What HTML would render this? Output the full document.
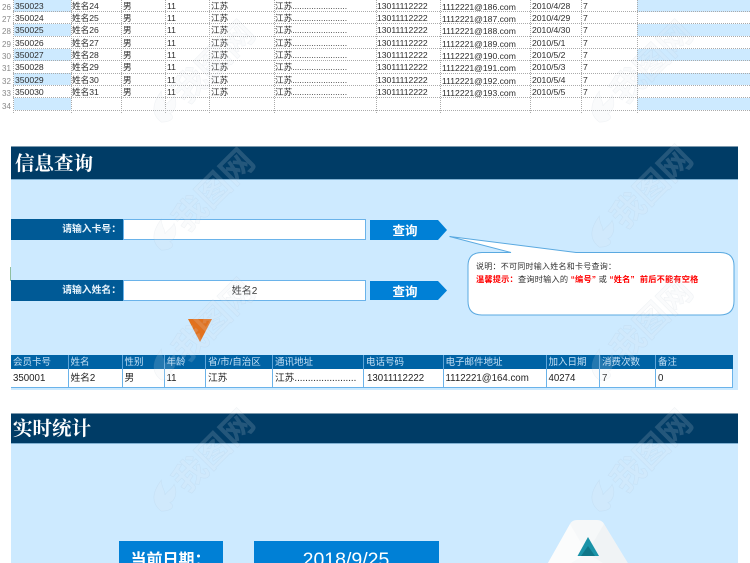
<!DOCTYPE html>
<html lang="zh">
<head>
<meta charset="utf-8">
<style>
html,body{margin:0;padding:0;background:#fff}
#p{position:relative;width:750px;height:563px;overflow:hidden;background:#fff;font-family:"Liberation Sans","Noto Sans CJK SC",sans-serif;filter:blur(.3px)}
#p div{position:absolute;box-sizing:border-box;white-space:nowrap}
.r{left:0;width:750px;height:12.33px;font-size:8.6px;line-height:11.5px;color:#2c2c2c}
.r span{position:absolute;top:1.5px;height:12.33px}
.r .n{left:2px;top:2.5px;color:#888;font-size:8px}
.a{left:15px}.b{left:72px}.c{left:123px}.d{left:167px}.e{left:211px}.f{left:275px}.g{left:377px}.r .h{left:442px;top:2.5px}.i{left:532px}.j{left:583px}
.hl{height:0;left:13px;width:737px;border-top:1px dotted #aaa}
.vl{width:0;top:0;height:113px;border-left:1px dotted #aaa}
.fa{left:14px;width:57px;height:12px;background:#cdeaff}
.fb{left:637px;width:113px;height:12px;background:#cdeaff}
.hd{left:11px;width:727px;background:#003c66;color:#fff;font-family:"Liberation Serif","Noto Serif CJK SC",serif;font-weight:700;font-size:19.5px;border-top:1px solid #7d99ad;border-bottom:1px solid #7fb0d2}
.pn{left:11px;width:727px;background:#cdeaff}
.lb{left:11px;width:112px;height:21px;background:#005a96;color:#e8f4fc;font-size:9.8px;font-weight:700;line-height:21px;text-align:right;padding-right:2px}
.in{left:123px;width:243px;height:21px;background:#fff;border:1px solid #6ab3ea;font-size:10px;line-height:21px;text-align:center;color:#333}
.th,.td{top:355px;height:13.5px;background:#0063a5;color:#c4e0f5;font-size:9.5px;line-height:15px;padding-left:2px;border-right:1px solid #5fa5d8}
.td{top:368.5px;height:19px;background:#fff;color:#222;line-height:19px;font-size:9.7px;font-weight:400;border-right:1px solid #6ab3ea;border-bottom:1px solid #6ab3ea;padding-left:2px}
.bx{background:#0080d6;color:#fff;top:541px;height:30px;text-align:center}
</style>
</head>
<body>
<div id="p">
<div class="fa" style="top:0"></div><div class="fa" style="top:24px"></div><div class="fa" style="top:49px"></div><div class="fa" style="top:73px"></div><div class="fa" style="top:98px"></div>
<div class="fb" style="top:0"></div><div class="fb" style="top:24px"></div><div class="fb" style="top:49px"></div><div class="fb" style="top:73px"></div><div class="fb" style="top:98px"></div>

<div class="hl" style="top:11px"></div><div class="hl" style="top:23px"></div><div class="hl" style="top:36px"></div><div class="hl" style="top:48px"></div><div class="hl" style="top:60px"></div><div class="hl" style="top:73px"></div><div class="hl" style="top:85px"></div><div class="hl" style="top:97px"></div><div class="hl" style="top:110px"></div>
<div class="vl" style="left:13px"></div><div class="vl" style="left:71px"></div><div class="vl" style="left:121px"></div><div class="vl" style="left:165px"></div><div class="vl" style="left:209px"></div><div class="vl" style="left:274px"></div><div class="vl" style="left:376px"></div><div class="vl" style="left:440px"></div><div class="vl" style="left:530px"></div><div class="vl" style="left:581px"></div><div class="vl" style="left:637px"></div>

<div class="r" style="top:-1px"><span class="n">26</span><span class="a">350023</span><span class="b">姓名24</span><span class="c">男</span><span class="d">11</span><span class="e">江苏</span><span class="f">江苏.......................</span><span class="g">13011112222</span><span class="h">1112221@186.com</span><span class="i">2010/4/28</span><span class="j">7</span></div>
<div class="r" style="top:11.3px"><span class="n">27</span><span class="a">350024</span><span class="b">姓名25</span><span class="c">男</span><span class="d">11</span><span class="e">江苏</span><span class="f">江苏.......................</span><span class="g">13011112222</span><span class="h">1112221@187.com</span><span class="i">2010/4/29</span><span class="j">7</span></div>
<div class="r" style="top:23.7px"><span class="n">28</span><span class="a">350025</span><span class="b">姓名26</span><span class="c">男</span><span class="d">11</span><span class="e">江苏</span><span class="f">江苏.......................</span><span class="g">13011112222</span><span class="h">1112221@188.com</span><span class="i">2010/4/30</span><span class="j">7</span></div>
<div class="r" style="top:36px"><span class="n">29</span><span class="a">350026</span><span class="b">姓名27</span><span class="c">男</span><span class="d">11</span><span class="e">江苏</span><span class="f">江苏.......................</span><span class="g">13011112222</span><span class="h">1112221@189.com</span><span class="i">2010/5/1</span><span class="j">7</span></div>
<div class="r" style="top:48.3px"><span class="n">30</span><span class="a">350027</span><span class="b">姓名28</span><span class="c">男</span><span class="d">11</span><span class="e">江苏</span><span class="f">江苏.......................</span><span class="g">13011112222</span><span class="h">1112221@190.com</span><span class="i">2010/5/2</span><span class="j">7</span></div>
<div class="r" style="top:60.7px"><span class="n">31</span><span class="a">350028</span><span class="b">姓名29</span><span class="c">男</span><span class="d">11</span><span class="e">江苏</span><span class="f">江苏.......................</span><span class="g">13011112222</span><span class="h">1112221@191.com</span><span class="i">2010/5/3</span><span class="j">7</span></div>
<div class="r" style="top:73px"><span class="n">32</span><span class="a">350029</span><span class="b">姓名30</span><span class="c">男</span><span class="d">11</span><span class="e">江苏</span><span class="f">江苏.......................</span><span class="g">13011112222</span><span class="h">1112221@192.com</span><span class="i">2010/5/4</span><span class="j">7</span></div>
<div class="r" style="top:85.3px"><span class="n">33</span><span class="a">350030</span><span class="b">姓名31</span><span class="c">男</span><span class="d">11</span><span class="e">江苏</span><span class="f">江苏.......................</span><span class="g">13011112222</span><span class="h">1112221@193.com</span><span class="i">2010/5/5</span><span class="j">7</span></div>
<div class="r" style="top:98.7px"><span class="n">34</span></div>

<!-- panel 1 -->
<div class="pn" style="top:180px;height:210px"></div>
<div class="hd" style="top:146px;height:34px;line-height:36px;padding-left:4px">信息查询</div>
<div style="left:10px;top:267px;width:1px;height:14px;background:#8fbf9f"></div>

<div class="lb" style="top:219px">请输入卡号：</div>
<div class="in" style="top:219px"></div>
<div class="lb" style="top:280px">请输入姓名：</div>
<div class="in" style="top:280px">姓名2</div>

<svg style="position:absolute;left:0;top:0" width="750" height="563" viewBox="0 0 750 563">
<polygon points="370,220 438,220 447,230 438,240 370,240" fill="#0080d6"/>
<polygon points="370,281 438,281 447,290.500 438,300 370,300" fill="#0080d6"/>
<polygon points="188,319 212,319 200,342" fill="#e2711d"/>
<path d="M482 252.500 L511 252.500 L449.500 236.500 L576 252.500 L720 252.500 Q734 252.500 734 266 L734 301 Q734 315 720 315 L482 315 Q468 315 468 301 L468 266 Q468 252.500 482 252.500 Z" fill="#fff" stroke="#5aa9e0" stroke-width="1"/>
</svg>
<div style="left:370px;top:220px;width:70px;height:20px;line-height:22px;text-align:center;color:#fff;font-weight:700;font-size:12.5px">查询</div>
<div style="left:370px;top:281px;width:70px;height:20px;line-height:22px;text-align:center;color:#fff;font-weight:700;font-size:12.5px">查询</div>

<div style="left:476px;top:261px;font-size:8px;letter-spacing:.25px;line-height:12px;color:#333">说明：不可同时输入姓名和卡号查询：</div>
<div style="left:476px;top:274px;font-size:8.2px;letter-spacing:.2px;line-height:12px;color:#333"><b style="color:#f00">温馨提示：</b>查询时输入的 <b style="color:#f00">“编号”</b> 或 <b style="color:#f00">“姓名”</b> &nbsp;<b style="color:#f00">前后不能有空格</b></div>

<!-- result table -->
<div class="th" style="left:11px;width:57.500px">会员卡号</div>
<div class="th" style="left:68.500px;width:54px">姓名</div>
<div class="th" style="left:122.500px;width:42px">性别</div>
<div class="th" style="left:164.500px;width:41.500px">年龄</div>
<div class="th" style="left:206px;width:67px">省/市/自治区</div>
<div class="th" style="left:273px;width:91px">通讯地址</div>
<div class="th" style="left:364px;width:79.500px">电话号码</div>
<div class="th" style="left:443.500px;width:103px">电子邮件地址</div>
<div class="th" style="left:546.500px;width:53.500px">加入日期</div>
<div class="th" style="left:600px;width:56px">消费次数</div>
<div class="th" style="left:656px;width:77px;border-right:0">备注</div>

<div class="td" style="left:11px;width:57.500px">350001</div>
<div class="td" style="left:68.500px;width:54px">姓名2</div>
<div class="td" style="left:122.500px;width:42px">男</div>
<div class="td" style="left:164.500px;width:41.500px">11</div>
<div class="td" style="left:206px;width:67px">江苏</div>
<div class="td" style="left:273px;width:91px">江苏.......................</div>
<div class="td" style="left:364px;width:79.500px;padding-left:3px">13011112222</div>
<div class="td" style="left:443.500px;width:103px">1112221@164.com</div>
<div class="td" style="left:546.500px;width:53.500px">40274</div>
<div class="td" style="left:600px;width:56px">7</div>
<div class="td" style="left:656px;width:77px">0</div>

<!-- panel 2 -->
<div class="pn" style="top:443px;height:120px"></div>
<div class="hd" style="top:412.500px;height:31px;line-height:32px;padding-left:2px">实时统计</div>

<div class="bx" style="left:118.500px;width:104px;font-size:16px;font-weight:700;line-height:39px">当前日期：</div>
<div class="bx" style="left:253.500px;width:185px;font-size:19.500px;line-height:39px">2018/9/25</div>

<svg style="position:absolute;left:0;top:0" width="750" height="563" viewBox="0 0 750 563">
<path d="M577 520 L597 520 Q602 520 604 524 L632 570 L544 570 L570 524 Q572 520 577 520 Z" fill="#f6f8f9"/>
<path d="M570 524 L587 553 L560 570 L544 570 Z" fill="#fbfcfc"/>
<path d="M604 524 L587 553 L614 570 L632 570 Z" fill="#f0f3f5"/>
<polygon points="588,537 577.500,556 599,556" fill="#1a93a8"/>
<polygon points="588,546 581,556 595,556" fill="#0f7688"/>

<!-- watermarks -->
<g font-family="'Liberation Sans','Noto Sans CJK SC',sans-serif" font-weight="700" font-size="33">
<defs>
<g id="wm">
<path d="M-14 6 C-16 -8 -6 -14 8 -16 C2 -10 4 -6 0 -3 C6 -4 10 -2 14 -4 C10 6 2 8 -2 6 C0 12 -6 14 -14 6 Z"/>
<text x="16" y="12">我图网</text>
</g>
</defs>
<g fill="#dfe6ea" fill-opacity=".16" stroke="#7f93a3" stroke-opacity=".09" stroke-width=".6">
<use href="#wm" transform="translate(167,108) rotate(-45)"/>
<use href="#wm" transform="translate(167,236) rotate(-45)"/>
<use href="#wm" transform="translate(167,366) rotate(-45)"/>
<use href="#wm" transform="translate(167,497) rotate(-45)"/>
<use href="#wm" transform="translate(605,108) rotate(-45)"/>
<use href="#wm" transform="translate(605,233) rotate(-45)"/>
<use href="#wm" transform="translate(605,366) rotate(-45)"/>
<use href="#wm" transform="translate(605,497) rotate(-45)"/>
</g>
</g>
</svg>
</div>
</body>
</html>
